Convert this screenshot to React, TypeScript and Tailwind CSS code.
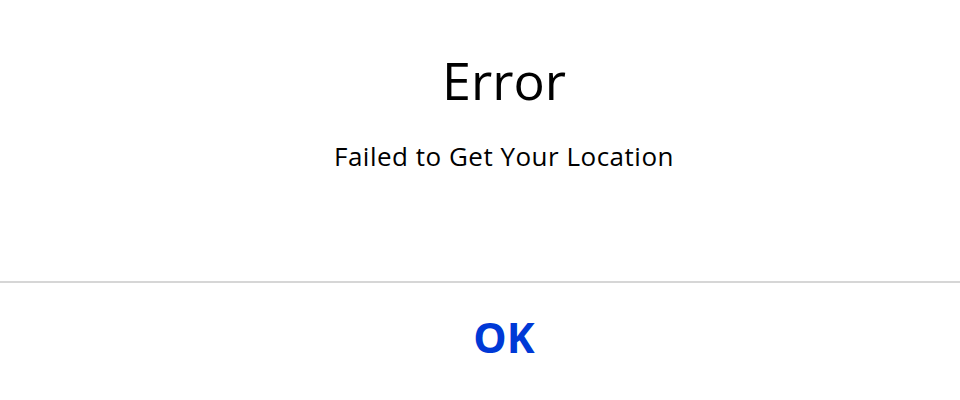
export default function App() {
  return (
    <div className="w-[960px] h-[400px] bg-white flex flex-col" style={{ fontFamily: '"Open Sans", sans-serif' }}>
      <div className="h-[281px] flex flex-col items-center pl-[48px]">
        <div className="mt-[54px] text-[52px] leading-none text-black">Error</div>
        <div className="mt-[37px] text-[26px] leading-none tracking-[0.5px] text-black">Failed to Get Your Location</div>
      </div>
      <div className="h-[2px] bg-[#d6d6d6]" />
      <div className="flex flex-col items-center pl-[48px]">
        <div className="mt-[33px] text-[42px] font-bold leading-none text-[#0039d6]">OK</div>
      </div>
    </div>
  );
}
